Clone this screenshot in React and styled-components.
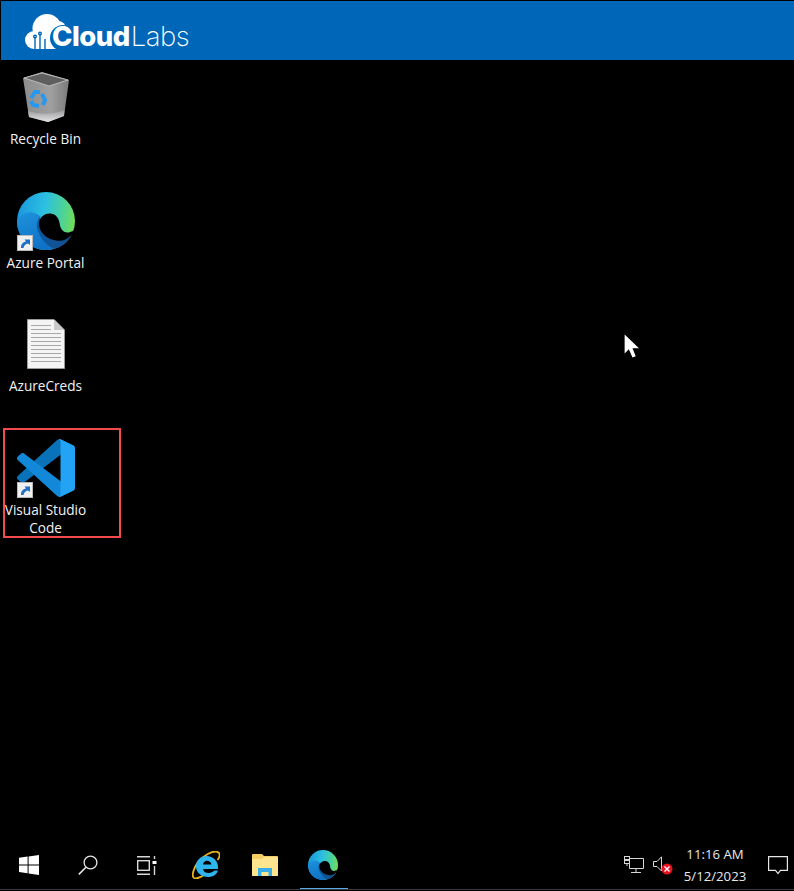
import React from 'react';
import styled, { createGlobalStyle } from 'styled-components';

const Global = createGlobalStyle`
  html, body { margin: 0; padding: 0; background: #000; }
  body { font-family: "Open Sans", "Noto Sans", "Liberation Sans", sans-serif; }
`;

const Screen = styled.div`
  width: 794px;
  height: 891px;
  display: flex;
  flex-direction: column;
  background: #000;
  overflow: hidden;
`;

const Header = styled.header`
  height: 59px;
  margin: 1px 0 0 1px;
  flex: none;
  background: #0067b8;
  display: flex;
  align-items: center;
  padding-left: 24px;
`;

const Logo = styled.div`
  position: relative;
  width: 170px;
  height: 40px;
`;

const LogoCloud = styled.svg`
  position: absolute;
  left: 0;
  top: 3px;
  width: 42px;
  height: 35px;
`;

const LogoText = styled.div`
  position: absolute;
  left: 27px;
  top: 5px;
  font-family: "Inter", sans-serif;
  font-size: 27.5px;
  line-height: 40px;
  letter-spacing: -0.5px;
  color: #fff;
  white-space: nowrap;
  b { font-weight: 800; }
  span { font-weight: 200; margin-left: 1px; }
`;

const Desktop = styled.main`
  flex: 1;
  position: relative;
  display: flex;
  flex-direction: column;
  align-items: flex-start;
  padding-top: 7px;
`;

const Shortcut = styled.div`
  position: relative;
  width: 91px;
  height: 123.5px;
  display: flex;
  flex-direction: column;
  align-items: center;
`;

const IconSlot = styled.div`
  position: relative;
  width: 60px;
  height: 60px;
  flex: none;
  display: flex;
  align-items: center;
  justify-content: center;
`;

const Label = styled.div`
  width: 91px;
  margin-top: 3px;
  font-size: 13.6px;
  line-height: 18px;
  color: #f2f2f2;
  text-align: center;
  text-shadow: 0 1px 2px rgba(0,0,0,.8);
`;

const Highlight = styled.div`
  position: absolute;
  left: 3px;
  top: -10px;
  width: 114px;
  height: 106px;
  border: 2px solid #f34b4b;
`;

const ArrowBadge = styled.svg`
  position: absolute;
  left: 1px;
  bottom: 0;
  width: 16px;
  height: 16px;
`;

const Cursor = styled.svg`
  position: absolute;
  left: 624px;
  top: 274px;
  width: 17px;
  height: 25px;
`;

const Taskbar = styled.footer`
  height: 49px;
  margin-bottom: 1px;
  flex: none;
  display: flex;
  align-items: center;
  border-bottom: 1px solid #30383c;
  box-sizing: border-box;
`;

const TaskButton = styled.div`
  position: relative;
  width: 58.8px;
  height: 48px;
  flex: none;
  display: flex;
  align-items: center;
  justify-content: center;
  ${p => p.$active && `
    &::after {
      content: "";
      position: absolute;
      left: 6px;
      right: 5px;
      bottom: 0;
      height: 1px;
      background: #5aa9e0;
    }
  `}
`;

const Tray = styled.div`
  margin-left: auto;
  display: flex;
  align-items: center;
  height: 48px;
`;

const TrayIcon = styled.div`
  width: ${p => p.$w}px;
  margin-left: ${p => p.$left || 0}px;
  display: flex;
  justify-content: center;
`;

const Clock = styled.div`
  width: 76px;
  text-align: center;
  font-size: 13.2px;
  line-height: 22px;
  color: #e8e8e8;
`;

const BinIcon = () => (
  <svg width="46" height="50" viewBox="0 0 46 50">
    <defs>
      <linearGradient id="binBody" x1="0" x2="1" y1="0" y2="0">
        <stop offset="0" stopColor="#8c8c8c" />
        <stop offset=".6" stopColor="#a0a0a0" />
        <stop offset="1" stopColor="#7a7a7a" />
      </linearGradient>
      <linearGradient id="binBase" x1="0" x2="0" y1="0" y2="1">
        <stop offset="0" stopColor="#9a9a9a" />
        <stop offset="1" stopColor="#e4e4e8" />
      </linearGradient>
    </defs>
    <path d="M0 6 L19 0 L46 8 L41 44 L25 50 L6 45 Z" fill="url(#binBody)" />
    <path d="M1 6 L19 1 L45 8 L26 14 Z" fill="#5f5f5f" stroke="#bcbcbc" strokeWidth="1" />
    <path d="M5 39 Q22 45 41.5 38 L41 44 L25 50 L6 45 Z" fill="url(#binBase)" />
    <g fill="none" stroke="#2698f0" strokeWidth="4">
      <path d="M8 26 L12 20 L17 20" />
      <path d="M19 22 L22 28 L20 33" />
      <path d="M16 34 L10 33 L8 29" />
    </g>
  </svg>
);

const EdgeIcon = ({ id, size }) => (
  <svg width={size} height={size} viewBox="0 0 100 100">
    <defs>
      <linearGradient id={id + 'a'} x1="0" y1="0.35" x2="1" y2="0.5">
        <stop offset="0" stopColor="#1a98dd" />
        <stop offset=".45" stopColor="#2cc0e2" />
        <stop offset=".8" stopColor="#4fd492" />
        <stop offset="1" stopColor="#74dd52" />
      </linearGradient>
      <linearGradient id={id + 'b'} x1="0" y1="0" x2="0.4" y2="1">
        <stop offset="0" stopColor="#1e93dc" />
        <stop offset="1" stopColor="#0f72c6" />
      </linearGradient>
      <linearGradient id={id + 'c'} x1="0" y1="0" x2="1" y2="0.3">
        <stop offset="0" stopColor="#0b5aa6" />
        <stop offset="1" stopColor="#12508f" />
      </linearGradient>
    </defs>
    <circle cx="50" cy="50" r="50" fill={`url(#${id}a)`} />
    <path d="M0 50 C8 34 26 30 40 42 C34 50 33 56 35 64 C39 80 52 92 66 97 C61 99 55 100 50 100 C22 100 0 78 0 50 Z" fill={`url(#${id}b)`} />
    <path d="M40 42 C32 52 33 60 36 68 C42 84 54 94 64 98 C78 95 88 86 94 74 C82 82 66 84 56 78 C46 72 40 62 40 42 Z" fill={`url(#${id}c)`} />
    <path d="M38 55 C38 44 47 36 58 37 C67 38 73 45 74 57 C75 63 78 67 82 69 C88 71 94 69 103 63 L103 70 L93 75 C86 82 78 85 70 84 C52 82 38 70 38 55 Z" fill="#000" />
  </svg>
);

const VSCodeIcon = () => (
  <svg width="58" height="58" viewBox="0 0 100 100">
    <path fill="#0a72b8" d="M96.4614 10.7962L75.8569 0.875542C73.4719 -0.272773 70.6217 0.211611 68.75 2.08333L1.29858 63.5832C-0.515693 65.2373 -0.513607 68.0937 1.30308 69.7452L6.81272 74.754C8.29793 76.1042 10.5347 76.2036 12.1338 74.9905L93.3609 13.3699C96.086 11.3026 100 13.2462 100 16.6667V16.4275C100 14.0265 98.6246 11.8378 96.4614 10.7962Z" />
    <path fill="#1188d8" d="M96.4614 89.2038L75.8569 99.1245C73.4719 100.273 70.6217 99.7884 68.75 97.9167L1.29858 36.4168C-0.515693 34.7627 -0.513607 31.9063 1.30308 30.2548L6.81272 25.246C8.29793 23.8958 10.5347 23.7964 12.1338 25.0095L93.3609 86.6301C96.086 88.6974 100 86.7538 100 83.3333V83.5725C100 85.9735 98.6246 88.1622 96.4614 89.2038Z" />
    <path fill="#23a3f5" d="M75.8578 99.1263C73.4721 100.274 70.6219 99.7885 68.75 97.9166C71.0564 100.223 75 98.5895 75 95.3278V4.67213C75 1.41039 71.0564 -0.223106 68.75 2.08329C70.6219 0.211402 73.4721 -0.273666 75.8578 0.873633L96.4587 10.7807C98.6234 11.8217 100 14.0112 100 16.4132V83.5871C100 85.9891 98.6234 88.1786 96.4586 89.2196L75.8578 99.1263Z" />
  </svg>
);

const FileIcon = () => (
  <svg width="38" height="50" viewBox="0 0 38 50">
    <path d="M.5 .5 H27 L37.5 11 V49.5 H.5 Z" fill="#f4f4f4" stroke="#9a9a9a" strokeWidth="1" />
    <path d="M27 .5 V11 H37.5 Z" fill="#c9c9c9" />
    <g stroke="#a8a8a8" strokeWidth="1">
      {[6, 10, 14, 18, 22, 26, 30, 34, 38, 42].map(y => (
        <path key={y} d={`M4 ${y + 0.5} H${y < 11 ? 24 : 34}`} />
      ))}
    </g>
  </svg>
);

const Arrow = () => (
  <ArrowBadge viewBox="0 0 16 16">
    <rect x="0.5" y="0.5" width="15" height="15" fill="#f0f0f0" stroke="#b9b9b9" />
    <path d="M4 13 C4 9 6 7 9 6.5 L7.5 4.5 H13 V10 L11 8.5 C8.5 9 7 10.5 6.5 13 Z" fill="#1f6fc4" />
  </ArrowBadge>
);

const WindowsIcon = () => (
  <svg width="20" height="20" viewBox="0 0 20 20" fill="#fff">
    <path d="M0 2.8 L8.6 1.6 V9.4 H0 Z" />
    <path d="M9.6 1.4 L20 0 V9.4 H9.6 Z" />
    <path d="M0 10.4 H8.6 V18.2 L0 17 Z" />
    <path d="M9.6 10.4 H20 V20 L9.6 18.5 Z" />
  </svg>
);

const SearchIcon = () => (
  <svg width="20" height="20" viewBox="0 0 20 20" fill="none" stroke="#e6e6e6" strokeWidth="1.3">
    <circle cx="12.5" cy="7.5" r="6.4" />
    <path d="M8 12.2 L0.8 19.4" strokeWidth="1.6" />
  </svg>
);

const TaskViewIcon = () => (
  <svg width="21" height="19" viewBox="0 0 21 19" fill="none" stroke="#d8d8d8" strokeWidth="1.4">
    <path d="M1 .7 H14 M1 18.3 H14" />
    <rect x="1.7" y="4.7" width="11.6" height="9.6" />
    <path d="M18.5 0 V3 M18.5 10 V19" />
    <rect x="16.5" y="5" width="4" height="3" fill="#fff" stroke="none" />
  </svg>
);

const IEIcon = () => (
  <svg width="28" height="28" viewBox="0 0 28 28">
    <path d="M2 27 C-1 25 2 14 10 7 C17 1 24 -1 27 2 C28.5 4 27 7 25.5 9" fill="none" stroke="#e8b31c" strokeWidth="1.8" />
    <path d="M2 27 C4 28 9 26 12 24" fill="none" stroke="#e8b31c" strokeWidth="1.8" />
    <path d="M14.5 5 C21 5 26 10 26 16 V18 H11 C11.5 21 14 22 16.5 22 C19 22 21 21 22.5 19.5 H26 C24.5 24 20.5 26 16 26 C9.5 26 4 21.5 4 15.5 C4 9.5 8.5 5 14.5 5 Z M11 13.5 H19.5 C19 11 17 9.8 15 9.8 C13 9.8 11.5 11 11 13.5 Z" fill="#2fb5ee" fillRule="evenodd" />
  </svg>
);

const FolderIcon = () => (
  <svg width="26" height="24" viewBox="0 0 26 24">
    <path d="M0 2 Q0 1 1 1 H10 L12 3 H25 Q26 3 26 4 V22 Q26 23 25 23 H1 Q0 23 0 22 Z" fill="#f5cd62" />
    <path d="M0 6 H10 L12 4 H26 V22 Q26 23 25 23 H1 Q0 23 0 22 Z" fill="#fde58f" />
    <path d="M6 23 V15 H20 V23 H16.5 V19 H9.5 V23 Z" fill="#39aee8" />
  </svg>
);

const NetworkIcon = () => (
  <svg width="20" height="18" viewBox="0 0 20 18" fill="none" stroke="#d8d8d8" strokeWidth="1">
    <path d="M6 2.5 H19.5 V12.5 H5.5 V8" />
    <path d="M12 12.5 V16.5 M7 16.5 H17" />
    <rect x="0.5" y="0.5" width="5" height="3" />
    <rect x="0.5" y="4.5" width="5" height="3" />
    <path d="M3 7.5 V10" />
  </svg>
);

const SpeakerIcon = () => (
  <svg width="20" height="19" viewBox="0 0 20 19">
    <path d="M.5 5.5 H4 L8.5 .8 V15 L4 10.5 H.5 Z" fill="none" stroke="#d8d8d8" />
    <circle cx="14" cy="13" r="5.5" fill="#e81123" />
    <path d="M11.5 10.5 L16.5 15.5 M16.5 10.5 L11.5 15.5" stroke="#fff" strokeWidth="1.4" />
  </svg>
);

const ActionIcon = () => (
  <svg width="20" height="19" viewBox="0 0 20 19" fill="none" stroke="#e6e6e6" strokeWidth="1.2">
    <path d="M.6 .6 H19.4 V14.4 H12.5 L10 17.6 L7.5 14.4 H.6 Z" />
  </svg>
);

const LogoMark = () => (
  <LogoCloud viewBox="0 0 42 35">
    <g fill="#fff">
      <circle cx="9" cy="26" r="9" />
      <circle cx="22" cy="14.5" r="14.5" />
      <circle cx="33" cy="15" r="8" />
      <rect x="9" y="18" width="24" height="17" />
    </g>
    <circle cx="38" cy="24" r="13" fill="#0067b8" />
    <g stroke="#0067b8" strokeWidth="1.4" fill="none">
      <path d="M10 35 V24 M15 35 V21 M20 35 V25" />
      <circle cx="10" cy="22.5" r="1.3" />
      <circle cx="15" cy="19.5" r="1.3" />
    </g>
  </LogoCloud>
);

export default function App() {
  return (
    <Screen>
      <Global />
      <Header>
        <Logo>
          <LogoMark />
          <LogoText><b>Cloud</b><span>Labs</span></LogoText>
        </Logo>
      </Header>
      <Desktop>
        <Shortcut>
          <IconSlot><BinIcon /></IconSlot>
          <Label>Recycle Bin</Label>
        </Shortcut>
        <Shortcut>
          <IconSlot>
            <EdgeIcon id="desk" size={58} />
            <Arrow />
          </IconSlot>
          <Label>Azure Portal</Label>
        </Shortcut>
        <Shortcut>
          <IconSlot><FileIcon /></IconSlot>
          <Label>AzureCreds</Label>
        </Shortcut>
        <Shortcut>
          <Highlight />
          <IconSlot>
            <VSCodeIcon />
            <Arrow />
          </IconSlot>
          <Label>Visual Studio Code</Label>
        </Shortcut>
        <Cursor viewBox="0 0 18 27">
          <path d="M0.5 0.5 V21 L5 16.5 L9 25.5 L12.5 24 L9 15.5 H16 Z" fill="#fff" />
        </Cursor>
      </Desktop>
      <Taskbar>
        <TaskButton><WindowsIcon /></TaskButton>
        <TaskButton><SearchIcon /></TaskButton>
        <TaskButton><TaskViewIcon /></TaskButton>
        <TaskButton><IEIcon /></TaskButton>
        <TaskButton><FolderIcon /></TaskButton>
        <TaskButton $active><EdgeIcon id="task" size={30} /></TaskButton>
        <Tray>
          <TrayIcon $w={29}><NetworkIcon /></TrayIcon>
          <TrayIcon $w={29}><SpeakerIcon /></TrayIcon>
          <Clock>11:16 AM<br />5/12/2023</Clock>
          <TrayIcon $w={32} $left={9}><ActionIcon /></TrayIcon>
        </Tray>
      </Taskbar>
    </Screen>
  );
}
